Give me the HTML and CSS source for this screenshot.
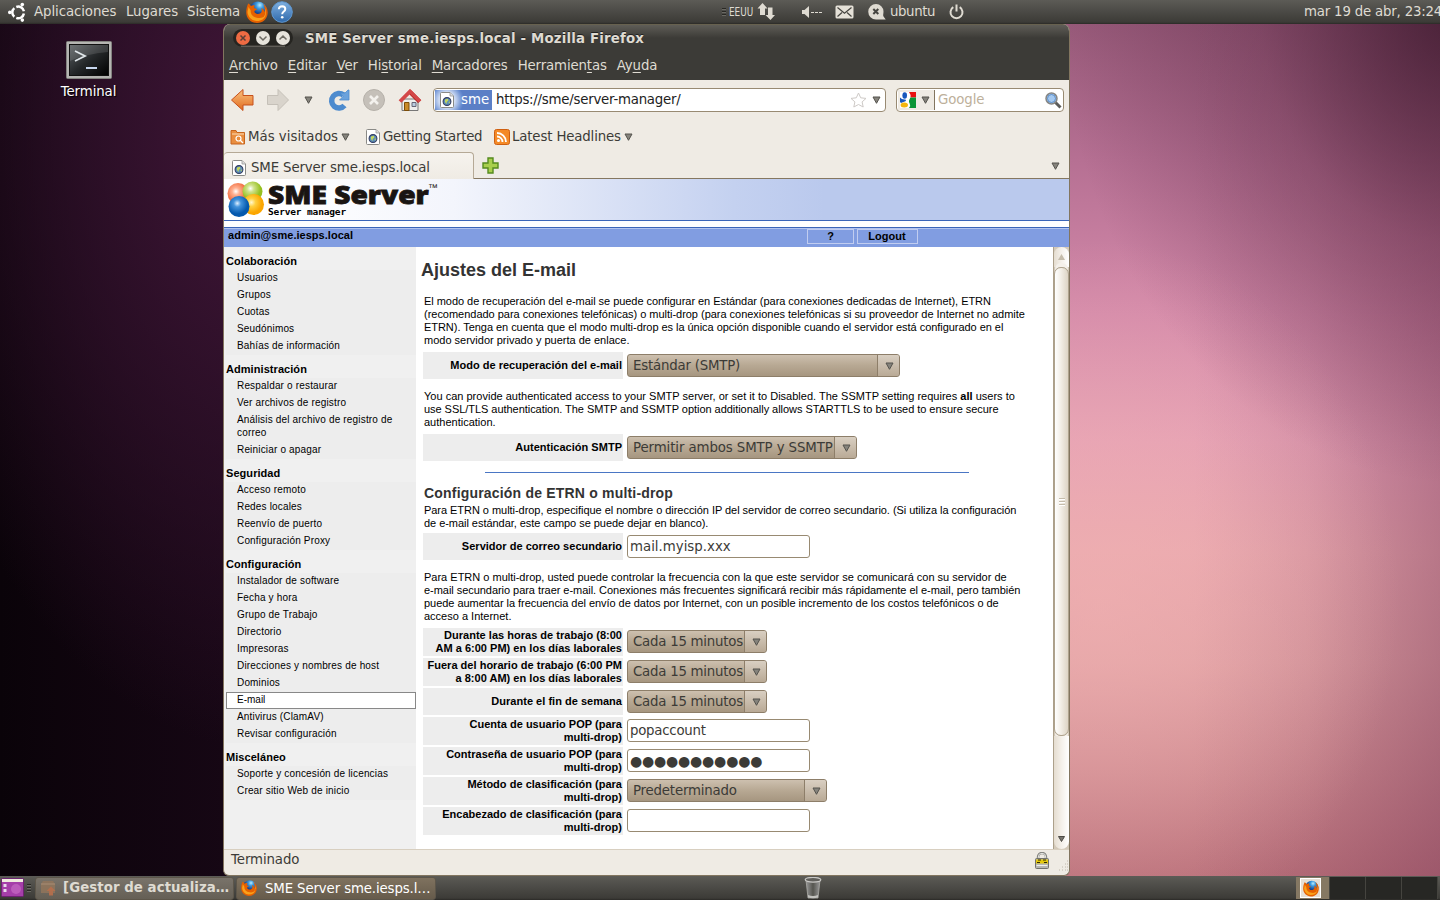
FILE: index.html
```html
<!DOCTYPE html>
<html lang="es">
<head>
<meta charset="utf-8">
<title>SME Server sme.iesps.local - Mozilla Firefox</title>
<link rel="stylesheet" href="styles.css">
</head>
<body>
<svg class="defs" width="0" height="0">
  <defs>
    <linearGradient id="orange" x1="0" y1="0" x2="0" y2="1"><stop offset="0" stop-color="#fbc27f"/><stop offset="1" stop-color="#e06a1e"/></linearGradient>
    <linearGradient id="blue" x1="0" y1="0" x2="0" y2="1"><stop offset="0" stop-color="#7fb0e0"/><stop offset="1" stop-color="#2f69ab"/></linearGradient>
    <linearGradient id="screen" x1="0" y1="0" x2="1" y2="1"><stop offset="0" stop-color="#5c6164"/><stop offset=".5" stop-color="#25282a"/><stop offset="1" stop-color="#000"/></linearGradient>
    <linearGradient id="can" x1="0" x2="1"><stop offset="0" stop-color="#999"/><stop offset=".5" stop-color="#55554f"/><stop offset="1" stop-color="#999"/></linearGradient>
    <radialGradient id="bred" cx=".4" cy=".4"><stop offset="0" stop-color="#fff"/><stop offset=".35" stop-color="#ffb090"/><stop offset="1" stop-color="#f0683a"/></radialGradient>
    <radialGradient id="bgreen" cx=".4" cy=".35"><stop offset="0" stop-color="#fff"/><stop offset=".35" stop-color="#cfe28a"/><stop offset="1" stop-color="#96c020"/></radialGradient>
    <radialGradient id="bblue" cx=".42" cy=".35"><stop offset="0" stop-color="#e0f0ff"/><stop offset=".35" stop-color="#4494dc"/><stop offset="1" stop-color="#0459ae"/></radialGradient>
    <radialGradient id="byellow" cx=".4" cy=".4"><stop offset="0" stop-color="#fff8d0"/><stop offset=".4" stop-color="#ffd040"/><stop offset="1" stop-color="#fba600"/></radialGradient>
    <radialGradient id="globe" cx=".6" cy=".2"><stop offset="0" stop-color="#b8ecff"/><stop offset=".4" stop-color="#3b9ae0"/><stop offset="1" stop-color="#143a86"/></radialGradient>
    <symbol id="fox" viewBox="0 0 22 22">
      <circle cx="12" cy="9.500" r="9" fill="url(#globe)"/>
      <path d="M2.200 2.500C3.500 3 4.300 4 4.800 5c1.300-1 3-1 4-.6L8 6.800c.8 1 2.300.8 3 1.500-1 1.200-2.500 1-2.600 2.300.3 2.400 3.500 3 5.500 2 2.500-1.300 2-3.600 1.300-5.600 2 .8 3 2.500 3.200 4 1-3 .3-6-1.500-8.500 3.300 2 5 5.500 4.800 9.500C21.300 18 17 22 11 22 5 22 .3 17.500.2 11.500.2 8 1 5 2.200 2.500z" fill="#e66000"/>
      <path d="M1.500 11c.5 5 4 8.500 9 9 4.500.2 8-2 9.500-6-2 2-4.500 3.500-8 3-5-.5-7.500-3.500-7.500-8L2.500 6z" fill="#f9a11b"/>
      <path d="M18.500 7c2 3 1.500 7-.5 9.500 2-4 1.500-6.500.5-9.500z" fill="#ffd84a"/>
    </symbol>
    <symbol id="page" viewBox="0 0 14 16">
      <path d="M.5 1.500q0-1 1-1H10L13.500 4v10.500q0 1-1 1h-11q-1 0-1-1z" fill="#fff" stroke="#8a8a86"/>
      <path d="M10 .5V4h3.500" fill="#ddd" stroke="#999" stroke-width=".8"/>
      <circle cx="7" cy="9.500" r="3.900" fill="#5d8fb8" stroke="#333d63" stroke-width="1.100"/>
      <path d="M5 7.500l3-.8.3 2-1.500 1-.3 2.200-1.500-2zM8.500 10l1.500-.5-.7 2.200z" fill="#c6d75a"/>
    </symbol>
    <symbol id="tri" viewBox="0 0 9 8"><path d="M1 1H8L4.500 7.300z" fill="#85837c" stroke="#55534d"/></symbol>
  </defs>
</svg>

<div class="screen">
  <header class="panel top">
    <svg class="ubuntu" width="18" height="20" viewBox="0 0 18 20"><g fill="none" stroke="#fff" stroke-width="2.500"><path d="M8.300 5A5.600 5.600 0 0 1 15.900 9.300M15.900 11.500A5.600 5.600 0 0 1 8.300 15.800M6.300 14.700A5.600 5.600 0 0 1 6.300 6.100"/></g><g fill="#fff"><circle cx="1.800" cy="10.400" r="1.800"/><circle cx="14.300" cy="2.600" r="1.800"/><circle cx="14.300" cy="18.100" r="1.800"/></g></svg>
    <span class="snug">Aplicaciones</span><span class="snug">Lugares</span><span class="snug">Sistema</span>
    <svg width="22" height="22"><use href="#fox"/></svg>
    <svg width="22" height="22" viewBox="0 0 22 22"><circle cx="11" cy="11" r="10.300" fill="url(#blue)" stroke="#5f97d0"/><path d="M7.800 8.300Q8 5.200 11.200 5.200 14.300 5.400 14.300 8 14.300 9.500 12.500 10.800 11.200 11.700 11.200 13.300" fill="none" stroke="#fff" stroke-width="2"/><circle cx="11.200" cy="16.200" r="1.300" fill="#fff"/></svg>
    <i class="grip"></i>
    <span class="kbd">EEUU</span>
    <svg width="19" height="18" viewBox="0 0 19 18"><path d="M5.500 0L10.500 5.500H8V12H3V5.500H.5zM13.500 17L8.500 12H11V4.500h4.500V12H18z" fill="#dfdbd2"/></svg>
    <svg width="21" height="14" viewBox="0 0 21 14"><path d="M0 5h2.500L7 1v12L2.500 9H0z" fill="#dfdbd2"/><path d="M9 7.500h12" stroke="#dfdbd2" stroke-dasharray="3 1"/></svg>
    <svg width="19" height="14" viewBox="0 0 19 14"><rect x=".5" y=".5" width="18" height="13" rx="1.500" fill="#e5e1d8"/><path d="M2.500 2.500l7 5.800 7-5.800M2.500 11.500l4.500-4M16.500 11.500l-4.500-4" stroke="#45443f" stroke-width="1.200" fill="none"/></svg>
    <svg width="18" height="16" viewBox="0 0 18 16"><path d="M8 0a7.500 7.500 0 0 1 7.500 7.500c0 2.500-.8 4 .2 5.300l2 2.700H8A7.500 7.500 0 0 1 8 0z" fill="#dfdbd2"/><path d="M5.300 5l5 5m0-5l-5 5" stroke="#45443f" stroke-width="2"/></svg>
    <span class="snugger">ubuntu</span>
    <svg width="15" height="16" viewBox="0 0 15 16"><path d="M4.300 3.200a6 6 0 1 0 6.400 0M7.500.5v7" fill="none" stroke="#dfdbd2" stroke-width="2"/></svg>
    <span class="clock">mar 19 de abr, 23:24</span>
  </header>

  <main class="desktop">
    <div class="launcher">
      <svg width="46" height="38" viewBox="0 0 46 38"><rect x=".5" y=".5" width="45" height="37" rx="1" fill="#b5b5b2" stroke="#83837f"/><rect x="3.500" y="3.500" width="39" height="31" fill="url(#screen)" stroke="#111"/><path d="M4 4h38v7Q20 13 4 20z" fill="#fff" opacity=".12"/><path d="M9 10l10 5-10 5" fill="none" stroke="#e0e6ea" stroke-width="1.800"/><path d="M20 27h11" stroke="#c7d6ee" stroke-width="2"/></svg>
      <span>Terminal</span>
    </div>

    <section class="window">
      <div class="chrome">
        <div class="titlebar">
          <svg width="60" height="18" viewBox="0 0 60 18"><rect x="0" y="0" width="60" height="17.500" rx="8.700" fill="#262521"/><path d="M8 17.200h44" stroke="#77756d"/><circle cx="10" cy="9" r="7" fill="#ee6b43"/><circle cx="30" cy="9" r="7" fill="#e7e4dc"/><circle cx="50" cy="9" r="7" fill="#e7e4dc"/><g fill="none" stroke="#5b4037" stroke-width="1.500"><path d="M7.500 6.500l5 5m0-5l-5 5"/><path d="M26.500 7.500L30 11l3.500-3.500M46.500 10.500L50 7l3.500 3.500" stroke="#6e6b63"/></g></svg>
          <b>SME Server sme.iesps.local - Mozilla Firefox</b>
        </div>
        <nav class="menubar">
          <span><u>A</u>rchivo</span><span><u>E</u>ditar</span><span><u>V</u>er</span><span>Hi<u>s</u>torial</span><span><u>M</u>arcadores</span><span>Herramien<u>t</u>as</span><span>Ay<u>u</u>da</span>
        </nav>
      </div>

      <div class="toolbar">
        <svg width="24" height="24" viewBox="0 0 24 24"><path d="M1.500 12L13 1.500V7.500h10v9.500H13V22.500z" fill="url(#orange)" stroke="#c6501c" stroke-linejoin="round"/></svg>
        <svg width="24" height="24" viewBox="0 0 24 24"><path d="M22.500 12L12 1.500V7.500H1.500v9H12V22.500z" fill="#d9d4cc" stroke="#c5c0b8" stroke-linejoin="round"/></svg>
        <svg width="9" height="8"><use href="#tri"/></svg>
        <svg class="reload" width="24" height="24" viewBox="0 0 24 24"><path d="M16.500 7A7.300 7.300 0 1 0 17.500 17.500" fill="none" stroke="#4d8bce" stroke-width="5.500"/><path d="M12.500 12L16 8.500 13 5l5 0L21 2h1V12z" fill="#6ba2dc" stroke="#4d8bce" stroke-width=".8"/></svg>
        <svg width="24" height="24" viewBox="0 0 24 24"><circle cx="12" cy="12" r="10.500" fill="#c5c0b9" stroke="#b5b0a9"/><path d="M8 8l8 8m0-8l-8 8" stroke="#f3f1ed" stroke-width="2.600"/></svg>
        <svg width="24" height="24" viewBox="0 0 24 24"><path d="M4 11h16v11.500H4z" fill="#eeeeec" stroke="#777"/><path d="M12 4L21.500 13.500" stroke="#a40000" stroke-width="4"/><path d="M2 13.500L12 3.500l10 10" fill="none" stroke="#d34848" stroke-width="3.800"/><path d="M6.500 14.500h4.500v8H6.500z" fill="#c98a28" stroke="#7c4d08"/><path d="M14 14.500h4v4h-4z" fill="#b9cde0" stroke="#667"/></svg>
        <div class="urlbar">
          <div class="identity"><svg width="14" height="16"><use href="#page"/></svg><span>sme</span></div>
          <span class="url">https://sme/server-manager/</span>
          <svg width="17" height="16" viewBox="0 0 17 16"><path d="M8.500 1l2.200 4.800 5.300.6-3.900 3.500 1.100 5.100-4.700-2.500L3.800 15l1.100-5.100L1 6.400l5.300-.6z" fill="#fff" stroke="#cdc9c6"/></svg>
          <svg width="9" height="8"><use href="#tri"/></svg>
        </div>
        <div class="search">
          <div class="engine">
            <svg width="16" height="16" viewBox="0 0 16 16"><path d="M0 0h16v16H0z" fill="#fff"/><path d="M9 0h7v5.500h-5.500Q11 2.500 9 0z" fill="#e8110f"/><path d="M10.500 5.500H16V16H9q2-2.500.5-5Q8 9 10.500 5.500z" fill="#0a9536"/><path d="M0 5.500Q2 8 5.500 7.500L6 9 1 11 0 10z" fill="#1757bd"/><ellipse cx="4.700" cy="3.500" rx="2.300" ry="3.200" fill="#1757bd"/><ellipse cx="4.300" cy="13" rx="3.700" ry="2.500" fill="#f4b60e"/></svg>
            <svg width="9" height="8"><use href="#tri"/></svg>
          </div>
          <span>Google</span>
          <svg width="17" height="17" viewBox="0 0 17 17"><path d="M10 10l5.500 5.500" stroke="#5b5b59" stroke-width="3"/><circle cx="6.500" cy="6.500" r="5.500" fill="#a8cbf0" stroke="#858583" stroke-width="1.500"/><circle cx="6.500" cy="6.500" r="4" fill="#a3c8f0" stroke="#4a7dbd" stroke-width=".8"/></svg>
        </div>
      </div>

      <div class="bookmarks">
        <svg width="16" height="16" viewBox="0 0 16 16"><path d="M1 1.500h5l1 2h7.500v11.500H1z" fill="#e98e3f" stroke="#c7651c"/><path d="M2 5h12" stroke="#fbdcb8"/><circle cx="8.500" cy="9.500" r="2.500" fill="none" stroke="#fff" stroke-width="1.200"/><path d="M10 11l3 3" stroke="#fff" stroke-width="1.300"/></svg>
        <span class="w92">Más visitados</span>
        <svg width="9" height="8"><use href="#tri"/></svg>
        <svg class="bm2" width="14" height="16"><use href="#page"/></svg>
        <span class="w109">Getting Started</span>
        <svg width="16" height="16" viewBox="0 0 16 16"><rect x=".5" y=".5" width="15" height="15" rx="2" fill="#f48a27" stroke="#cf5f10"/><circle cx="4.500" cy="11.500" r="1.500" fill="#fff"/><path d="M3 7.500A5.500 5.500 0 0 1 8.500 13M3 4a9 9 0 0 1 9 9" fill="none" stroke="#fff" stroke-width="1.800"/></svg>
        <span class="w110">Latest Headlines</span>
        <svg width="9" height="8"><use href="#tri"/></svg>
      </div>

      <div class="tabs">
        <div class="tab"><svg width="14" height="16"><use href="#page"/></svg><span>SME Server sme.iesps.local</span></div>
        <svg class="plus" width="17" height="17" viewBox="0 0 17 17"><path d="M6 1h5v5h5v5h-5v5H6v-5H1V6h5z" fill="#a9cf4c" stroke="#558b1e" stroke-width="1.400"/></svg>
        <svg class="all" width="9" height="8"><use href="#tri"/></svg>
      </div>

      <div class="page">
        <div class="banner">
          <svg width="38" height="37" viewBox="0 0 38 37"><circle cx="11" cy="12.500" r="10.500" fill="url(#bred)"/><circle cx="25.500" cy="10.500" r="10" fill="url(#bgreen)"/><circle cx="26.500" cy="23.500" r="10.500" fill="url(#byellow)"/><circle cx="12" cy="25.500" r="10.500" fill="url(#bblue)"/></svg>
          <div class="brand"><div class="word"><span>SME Server</span><sup>™</sup></div><small>Server manager</small></div>
        </div>
        <div class="rule"></div>
        <div class="userbar"><b>admin@sme.iesps.local</b><b class="btn help">?</b><b class="btn logout">Logout</b></div>
        <div class="body">
          <aside class="side">
            <h4>Colaboración</h4>
            <ul><li>Usuarios</li><li>Grupos</li><li>Cuotas</li><li>Seudónimos</li><li>Bahías de información</li></ul>
            <h4>Administración</h4>
            <ul><li>Respaldar o restaurar</li><li>Ver archivos de registro</li><li>Análisis del archivo de registro de<br>correo</li><li>Reiniciar o apagar</li></ul>
            <h4>Seguridad</h4>
            <ul><li>Acceso remoto</li><li>Redes locales</li><li>Reenvío de puerto</li><li>Configuración Proxy</li></ul>
            <h4>Configuración</h4>
            <ul><li>Instalador de software</li><li>Fecha y hora</li><li>Grupo de Trabajo</li><li>Directorio</li><li>Impresoras</li><li>Direcciones y nombres de host</li><li>Dominios</li><li class="current">E-mail</li><li>Antivirus (ClamAV)</li><li>Revisar configuración</li></ul>
            <h4>Misceláneo</h4>
            <ul><li>Soporte y concesión de licencias</li><li>Crear sitio Web de inicio</li></ul>
          </aside>

          <article class="content">
            <h1>Ajustes del E-mail</h1>
            <p class="first"><span class="tight">El modo de recuperación del e-mail se puede configurar en Estándar (para conexiones dedicadas de Internet), ETRN</span><br><span class="slight">(recomendado para conexiones telefónicas) o multi-drop (para conexiones telefónicas si su proveedor de Internet no admite</span><br><span class="tight">ETRN). Tenga en cuenta que el modo multi-drop es la única opción disponible cuando el servidor está configurado en el</span><br>modo servidor privado y puerta de enlace.</p>
            <div class="row"><label>Modo de recuperación del e-mail</label><div class="select w273"><span>Estándar (SMTP)</span><i><svg width="9" height="8"><use href="#tri"/></svg></i></div></div>
            <p class="second"><span class="loose">You can provide authenticated access to your SMTP server, or set it to Disabled. The SSMTP setting requires <b>all</b> users to</span><br><span class="tight">use SSL/TLS authentication. The SMTP and SSMTP option additionally allows STARTTLS to be used to ensure secure</span><br>authentication.</p>
            <div class="row"><label>Autenticación SMTP</label><div class="select w230"><span>Permitir ambos SMTP y SSMTP</span><i><svg width="9" height="8"><use href="#tri"/></svg></i></div></div>
            <hr>
            <h2>Configuración de ETRN o multi-drop</h2>
            <p class="third"><span class="tight">Para ETRN o multi-drop, especifique el nombre o dirección IP del servidor de correo secundario. (Si utiliza la configuración</span><br><span class="tight">de e-mail estándar, este campo se puede dejar en blanco).</span></p>
            <div class="row"><label>Servidor de correo secundario</label><div class="input">mail.myisp.xxx</div></div>
            <p class="fourth">Para ETRN o multi-drop, usted puede controlar la frecuencia con la que este servidor se comunicará con su servidor de<br><span class="tight">e-mail secundario para traer e-mail. Conexiones más frecuentes significará recibir más rápidamente el e-mail, pero también</span><br><span class="tight">puede aumentar la frecuencia del envío de datos por Internet, con un posible incremento de los costos telefónicos o de</span><br>acceso a Internet.</p>
            <div class="rows">
              <div class="row tall"><label>Durante las horas de trabajo (8:00<br>AM a 6:00 PM) en los días laborales</label><div class="select w140"><span>Cada 15 minutos</span><i><svg width="9" height="8"><use href="#tri"/></svg></i></div></div>
              <div class="row tall"><label>Fuera del horario de trabajo (6:00 PM<br>a 8:00 AM) en los días laborales</label><div class="select w140"><span>Cada 15 minutos</span><i><svg width="9" height="8"><use href="#tri"/></svg></i></div></div>
              <div class="row"><label>Durante el fin de semana</label><div class="select w140"><span>Cada 15 minutos</span><i><svg width="9" height="8"><use href="#tri"/></svg></i></div></div>
              <div class="row tall"><label>Cuenta de usuario POP (para<br>multi-drop)</label><div class="input">popaccount</div></div>
              <div class="row tall"><label>Contraseña de usuario POP (para<br>multi-drop)</label><div class="input dots">●●●●●●●●●●●</div></div>
              <div class="row tall"><label>Método de clasificación (para<br>multi-drop)</label><div class="select w200"><span>Predeterminado</span><i><svg width="9" height="8"><use href="#tri"/></svg></i></div></div>
              <div class="row tall"><label>Encabezado de clasificación (para<br>multi-drop)</label><div class="input"></div></div>
            </div>
          </article>

          <div class="scroll">
            <div class="up"><svg width="7" height="6"><path d="M0 6h7L3.500 0z" fill="#c5bcab"/></svg></div>
            <div class="thumb"><i></i></div>
            <div class="down"><svg width="7" height="6"><path d="M.5.500h6L3.500 5.500z" fill="#77756f" stroke="#4c4a45"/></svg></div>
          </div>
        </div>
      </div>

      <footer class="status">
        <span>Terminado</span>
        <svg width="14" height="17" viewBox="0 0 14 17"><path d="M3 8V5a4 4 0 0 1 8 0v3" fill="none" stroke="#84847f" stroke-width="2.400"/><path d="M3.300 8V5a3.700 3.700 0 0 1 7.400 0v3" fill="none" stroke="#e5e5e2" stroke-width="1"/><rect x=".5" y="6.500" width="13" height="10" rx="1" fill="#b5b5b2" stroke="#72726f"/><path d="M1 7.500h12v4H1z" fill="#e5c90f"/><path d="M3 8h3M8 8h3M2 10.500h3m4 0h3" stroke="#332d00"/><path d="M1.500 13.500h11" stroke="#eee"/></svg>
        <svg class="resize" width="9" height="11" viewBox="0 0 9 11"><path d="M8 1h1M6 4h1m1 0h1M3 7h1m2 0h1m1 0h1M0 10h1m2 0h1m2 0h1m1 0h1" stroke="#c0b8ab"/></svg>
      </footer>
    </section>
  </main>

  <footer class="panel bottom">
    <svg class="showdesk" width="23" height="19" viewBox="0 0 23 19"><rect x=".5" y=".5" width="22" height="18" rx="1" fill="#a53fa9" stroke="#6d2372"/><path d="M1 1h21v3H1z" fill="#f0ecdf"/><path d="M2.500 6h3v3h-3zM2.500 11h3v3h-3z" fill="#e9d9ec"/><circle cx="15" cy="11" r="5" fill="#d47bd0" opacity=".5"/></svg>
    <i class="grip"></i>
    <div class="task min"><svg width="16" height="16" viewBox="0 0 16 16"><path d="M1 4l2-3h10l2 3v9H1z" fill="#93765b"/><path d="M1 4h14" stroke="#b5947a"/><path d="M11 6.500l4.500 4.500h-2.500v4.500H9V11H6.500z" fill="#c3714a"/></svg><b>[Gestor de actualiza…</b></div>
    <div class="task active"><svg width="16" height="16"><use href="#fox"/></svg><span>SME Server sme.iesps.l…</span></div>
    <svg class="trash" width="18" height="22" viewBox="0 0 18 22"><path d="M2 3h14l-2 18H4z" fill="url(#can)" stroke="#aaa9a5" stroke-width=".8"/><ellipse cx="9" cy="2.800" rx="7.800" ry="2.300" fill="#61605c" stroke="#c9c8c5" stroke-width="1.200"/><path d="M4 18q5 2 10 0v2.500q-5 1.500-10 0z" fill="#c2c2be"/></svg>
    <div class="switcher"><div class="on"><span><svg width="16" height="17"><use href="#fox"/></svg></span></div><div></div><div></div><div></div></div>
  </footer>
</div>
</body>
</html>
```
FILE: styles.css
```css
* { box-sizing: border-box; }
body { margin: 0; overflow: hidden; font: 13.33px/16px "DejaVu Sans", sans-serif; color: #3c3b37; }
svg { display: block; flex: none; }
.defs { position: absolute; }
span, b { white-space: nowrap; }

.screen {
  width: 1440px; height: 900px;
  display: grid; grid-template-rows: 24px 852px 24px;
  background:
    radial-gradient(ellipse 400px 480px at 400px -20px, rgba(55,22,42,.8), rgba(80,35,60,.35) 50%, rgba(80,35,60,0)) 1060px 24px / 380px 852px no-repeat,
    radial-gradient(ellipse 300px 360px at 40px 575px, rgba(242,178,178,.6), rgba(242,178,178,0)) 1060px 24px / 380px 852px no-repeat,
    linear-gradient(90deg, rgba(130,65,95,0) 35%, rgba(130,65,95,.16) 65%, rgba(125,60,90,.45)) 1060px 24px / 380px 852px no-repeat,
    linear-gradient(#985a7a 0, #b67093 16%, #d48aaa 34%, #e49fb5 49%, #e8a7ae 62%, #dfa0a3 75%, #cc888e 88%, #b86f79 100%) 1060px 24px / 380px 852px no-repeat,
    radial-gradient(ellipse 380px 620px at 270px 130px, #43173a 0, rgba(52,18,46,.7) 50%, rgba(20,6,18,0) 100%),
    linear-gradient(90deg, #0a0309 0, #1a0818 300px);
}

/* Desktop panels */
.panel { background: linear-gradient(#5c5b56, #3c3b37 92%, #2b2a27); color: #dfdbd2; }
.top {
  display: grid; align-items: center; padding-left: 8px; height: 24px;
  grid-template-columns: 26px 92px 61px 59px 25px 451px 7px 28px 45px 33px 33px 22px 59px 355px 136px;
}
.top span { line-height: 24px; height: 24px; }
.snug { letter-spacing: -.08px; }
.snugger { letter-spacing: -.4px; }
.top .clock { letter-spacing: -.19px; }
.kbd { font-size: 12px; transform: scaleX(.74); transform-origin: 0 0; }
.grip { width: 4px; height: 8px; background: repeating-linear-gradient(#292824 0 1px, #6a6963 1px 2px, transparent 2px 3px); }

.desktop { position: relative; }
.launcher {
  position: absolute; left: 47px; top: 17px; width: 83px;
  display: flex; flex-direction: column; align-items: center; gap: 5px;
  color: #fff; text-shadow: 1px 1px 1px #000; letter-spacing: -.1px;
}

/* Browser window */
.window {
  position: absolute; left: 223px; top: 0; width: 847px; height: 852px;
  display: grid; grid-template-rows: 56px 40px 32px 27px 670px 26px;
  background: #efebe4; border: 1px solid #82755f; border-top: 0; border-radius: 7px 7px 6px 6px; overflow: hidden;
}
.chrome { background: linear-gradient(#5f5d57, #3c3b37 13px); color: #dfdbd2; border-top: 1px solid #67614f; }
.titlebar { display: flex; height: 26px; align-items: center; padding-left: 9px; gap: 12px; }
.titlebar b { text-shadow: 0 -1px #222; letter-spacing: .18px; padding-top: 1px; }
.menubar { display: flex; height: 29px; align-items: center; padding-left: 5px; gap: 10px; letter-spacing: -.14px; }
.menubar u { text-underline-offset: 2px; }

.toolbar { display: flex; align-items: center; padding-left: 6px; }
.toolbar > svg:nth-child(2) { margin-left: 12px; }
.toolbar > svg:nth-child(3) { margin-left: 14px; }
.toolbar > .reload { margin: 0 0 0 14px; }
.toolbar > svg:nth-child(5) { margin-left: 11px; }
.toolbar > svg:nth-child(6) { margin-left: 12px; }
.urlbar, .search { height: 24px; border: 1px solid #988a72; border-radius: 4px; background: #fff; display: flex; align-items: center; }
.urlbar { width: 453px; margin-left: 11px; padding: 1px; }
.identity {
  width: 57px; height: 20px; display: flex; align-items: center; padding-left: 5px; gap: 7px; color: #fff;
  background: radial-gradient(circle at 12px 10px, #cfdcf3 0 8px, #6b8fd2 15px, #5b7fc6 17px);
}
.url { margin-left: 4px; width: 354px; color: #222; letter-spacing: -.24px; }
.urlbar svg:last-child { margin-left: 5px; }
.search { width: 168px; margin-left: 10px; padding: 1px; }
.engine { width: 37px; height: 20px; background: #efebe4; border-right: 1px solid #82755f; display: flex; align-items: center; gap: 5px; padding-left: 2px; }
.search > span { color: #bdb09b; width: 107px; margin-left: 3px; letter-spacing: -.1px; }

.bookmarks { display: flex; align-items: center; padding: 2px 0 0 6px; gap: 2px; }
.w92 { width: 91px; }
.w109 { width: 109px; letter-spacing: -.25px; }
.w110 { width: 110px; letter-spacing: -.15px; }
.bookmarks .bm2 { margin-left: 14px; margin-right: 1px; }

.tabs { display: flex; align-items: center; background: linear-gradient(transparent 26px, #857760 26px); }
.tab { width: 250px; height: 27px; padding: 3px 0 0 8px; display: flex; align-items: center; gap: 5px; letter-spacing: -.14px; background: linear-gradient(#f6f3ee, #efebe4); border: 1px solid #b5a996; border-width: 1px 1px 0 0; border-radius: 4px 4px 0 0; }
.plus { margin: 0 552px 0 8px; }

/* Web page */
.page { display: grid; grid-template-rows: 41px 8px 19px 602px; background: #fff; font: 11px/13px "Liberation Sans", Arial, sans-serif; color: #000; }
.banner { display: flex; padding: 2px 0 0 3px; gap: 3px; background: linear-gradient(90deg, #fff 60px, #f3f5fc 230px, #c4d1f0 510px, #bac9ed 600px); }
.brand { display: flex; flex-direction: column; }
.word { display: flex; height: 25px; color: #1a1512; }
.word span { font: 800 25px/26px "Open Sans", sans-serif; -webkit-text-stroke: .8px; width: 160px; transform: scaleX(1.125); transform-origin: 0 0; }
.word sup { font-size: 10px; line-height: 14px; }
.brand small { font: bold 9.500px/10px "DejaVu Sans Mono", monospace; letter-spacing: -.15px; margin-top: 1px; }
.rule { border-top: 1px solid #3c66b8; border-bottom: 1px solid #3c66b8; }
.userbar { display: flex; background: #819de1; border-top: 1px solid #b4c4ee; padding-left: 4px; height: 19px; }
.userbar b:first-child { width: 579px; letter-spacing: .03px; }
.btn { border: 1px solid #c1cdf0; height: 15px; text-align: center; line-height: 13px; }
.help { width: 47px; margin-right: 3px; }
.logout { width: 61px; padding-right: 1px; }
.body { display: grid; grid-template-columns: 192px 637px 16px; height: 602px; }

.side { background: #f0f0f0; padding-left: 2px; }
.side h4 { margin: 0; height: 23px; padding-top: 7px; font-size: 11px; line-height: 14px; letter-spacing: .06px; }
.side ul { margin: 0; padding: 0; list-style: none; background: #ededed; font-size: 10px; letter-spacing: .17px; }
.side li { padding: 1px 0 3px 11px; white-space: nowrap; }
.side .current { background: #fff; border: 1px solid #888; padding: 0 0 2px 10px; letter-spacing: 0; }

.content { padding: 12px 0 0 7px; white-space: nowrap; }
h1 { margin: 0 0 0 -2px; font-size: 18px; line-height: 22px; color: #333; }
h2 { margin: 12px 0 0 1px; font-size: 14px; line-height: 17px; letter-spacing: .19px; color: #333; }
p { margin: 0 0 0 1px; }
.tight { letter-spacing: -.043px; }
.slight { letter-spacing: -.022px; }
.loose { letter-spacing: .01px; }
.first { margin-top: 14px; margin-bottom: 5px; }
.second { margin-top: 11px; margin-bottom: 5px; }
.third { margin-top: 2px; margin-bottom: 3px; }
.fourth { margin-top: 11px; margin-bottom: 5px; }
.content hr { height: 1px; width: 484px; border: 0; margin: 11px 0 0 62px; background: #4a76c4; }
.rows { display: grid; gap: 2px; }
.row { display: grid; grid-template-columns: 200px auto; justify-content: start; align-items: start; column-gap: 4px; height: 27px; }
.row.tall { height: 28px; }
.row label { height: 100%; background: #ededed; font-weight: bold; display: flex; align-items: center; justify-content: flex-end; text-align: right; padding-right: 1px; letter-spacing: .02px; }
.select { height: 23px; margin-top: 2px; display: flex; border: 1px solid #8d7e69; border-radius: 3px; background: linear-gradient(#cdc0af, #b8a994 48%, #a69680); font: 13.33px/21px "DejaVu Sans", sans-serif; letter-spacing: -.2px; color: #3c3b37; overflow: hidden; }
.select span { flex: 1; min-width: 0; padding-left: 5px; }
.w230 span { letter-spacing: -.1px; }
.w140 span { letter-spacing: -.24px; }
.select i { flex: none; width: 22px; border-left: 1px solid #8d7e69; background: linear-gradient(#d9cfc2, #b9aa96); display: grid; place-items: center; padding-left: 1px; }
.w273 { width: 273px; } .w230 { width: 230px; } .w140 { width: 140px; } .w200 { width: 200px; }
.input { width: 183px; height: 23px; margin-top: 2px; border: 1px solid #988a72; border-radius: 3px; background: #fff; padding-left: 2px; font: 13.33px/21px "DejaVu Sans", sans-serif; color: #3c3b37; }
.tall .input { letter-spacing: -.25px; }
.tall .dots { font-size: 14px; line-height: 22px; letter-spacing: -.2px; }

.scroll { display: grid; grid-template-rows: 20px 469px 1fr; background: #d3c9b9; border-left: 1px solid #aca08b; }
.up, .down { display: grid; place-items: center; background: linear-gradient(90deg, #e5ddd0, #f4f0ea 50%, #fff); }
.up { border-radius: 8px 8px 0 0; }
.thumb { border: 1px solid #aea28d; border-radius: 7px; background: linear-gradient(90deg, #fff, #f4f0e9 40%, #ddd4c5); display: grid; place-items: center; box-shadow: 0 5px 0 -1px #f4f0ea, 0 -5px 0 -1px #f4f0ea; }
.thumb i { width: 6px; height: 8px; background: repeating-linear-gradient(#c5bcab 0 1px, #fff 1px 2px, transparent 2px 3px); }
.down { border-radius: 0 0 8px 8px; place-items: end center; padding-bottom: 7px; }

.status { display: flex; align-items: center; padding: 0 1px 4px 7px; border-top: 1px solid #d8cfc0; letter-spacing: -.1px; }
.status span { width: 804px; height: 18px; }
.resize { margin-left: 10px; align-self: end; }

/* Bottom panel */
.bottom { display: flex; align-items: center; height: 24px; padding-left: 1px; }
.showdesk { margin-bottom: 1px; }
.bottom .grip { margin: 0 4px 0 3px; }
.task { height: 23px; border: 1px solid #5d564a; border-radius: 3px; display: flex; align-items: center; padding-left: 4px; color: #fff; }
.task span, .task b { padding-top: 1px; }
.min { width: 199px; margin-right: 2px; background: linear-gradient(#79736a, #655f55); color: #dfdbd2; gap: 7px; letter-spacing: .06px; }
.min b { padding: 0; }
.min svg { opacity: .8; }
.active { width: 200px; background: linear-gradient(#7f725f, #665b4b); gap: 8px; letter-spacing: -.13px; }
.trash { margin-left: 368px; }
.switcher { display: grid; grid-template-columns: 34px 36px 36px 36px; height: 22px; margin-left: 474px; }
.switcher div { background: #272724; border-right: 1px solid #45443f; }
.switcher .on { background: #857863; padding: 1px 0 0 4px; }
.switcher span { display: block; width: 21px; height: 20px; background: #e6dfd5; border: 1px solid #fff; padding: 1px 2px; }
```
